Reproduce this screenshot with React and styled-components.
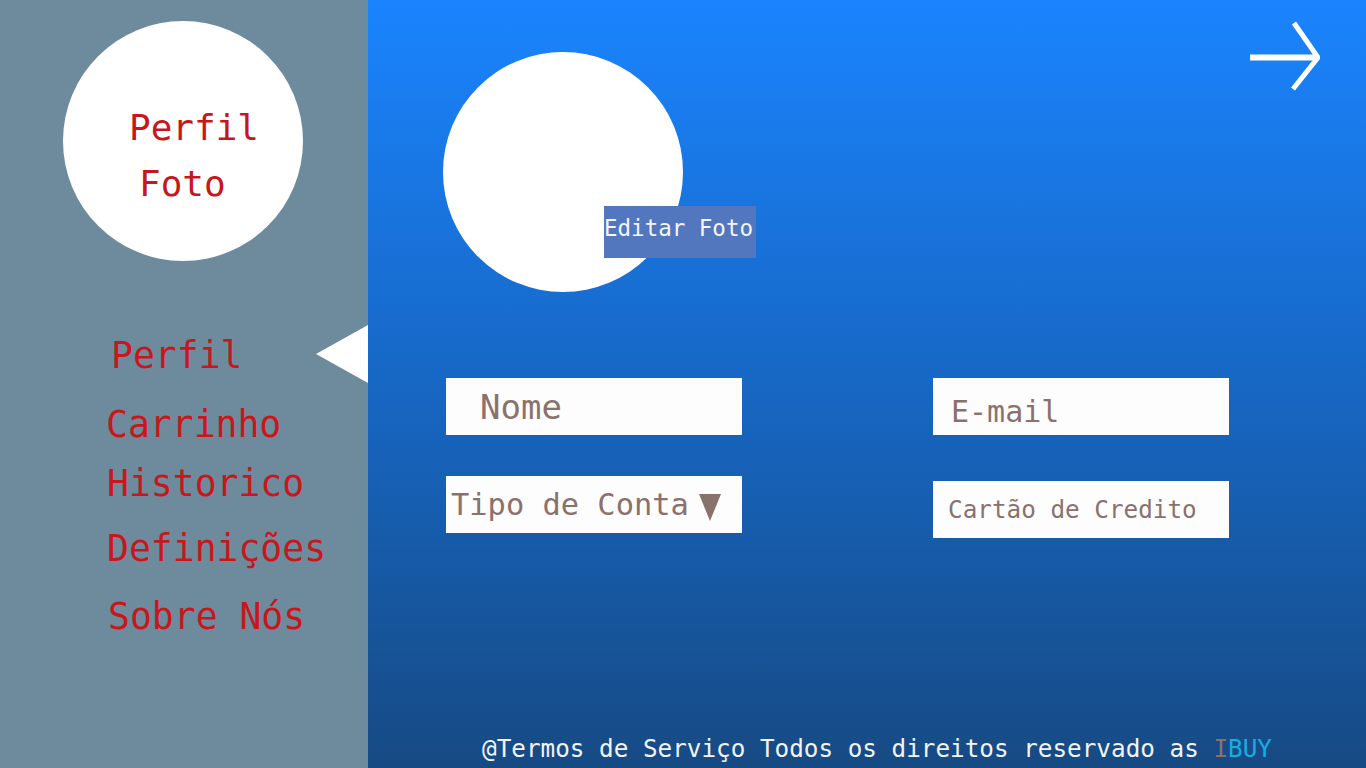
import React from "react";
import styled, { createGlobalStyle } from "styled-components";

const Global = createGlobalStyle`
  html, body { margin: 0; padding: 0; }
  body {
    font-family: "DejaVu Sans Mono", "Liberation Mono", monospace;
    overflow: hidden;
  }
  * { box-sizing: border-box; }
`;

const Page = styled.div`
  display: flex;
  width: 1366px;
  height: 768px;
`;

const Sidebar = styled.aside`
  width: 368px;
  flex: none;
  height: 100%;
  background: #6d8b9c;
  display: flex;
  flex-direction: column;
`;

const Avatar = styled.div`
  width: 240px;
  height: 240px;
  margin: 21px 0 0 63px;
  border-radius: 50%;
  background: #ffffff;
  padding-top: 78.5px;
  font-size: 36px;
  line-height: 56px;
  color: #c8171c;
`;

const AvatarLine = styled.div`
  padding-left: ${(p) => p.$indent}px;
`;

const Nav = styled.nav`
  margin-top: 64px;
  display: flex;
  flex-direction: column;
`;

const ActiveRow = styled.div`
  height: 58px;
  display: flex;
  align-items: center;
  justify-content: space-between;
  padding-left: ${(p) => p.$indent}px;
`;

const NavText = styled.span`
  font-size: 36.4px;
  line-height: 36px;
  color: #c8171c;
  padding-top: 3px;
`;

const Pointer = styled.span`
  width: 0;
  height: 0;
  border-top: 29px solid transparent;
  border-bottom: 29px solid transparent;
  border-right: 52px solid #ffffff;
`;

const NavItem = styled.div`
  font-size: 36.4px;
  line-height: 36px;
  color: #c8171c;
  white-space: nowrap;
  margin-top: ${(p) => p.$top}px;
  padding-left: ${(p) => p.$indent}px;
`;

const Main = styled.main`
  flex: 1;
  height: 100%;
  display: flex;
  flex-direction: column;
  background: linear-gradient(180deg, #1a84fe 0%, #1767c4 50%, #164a83 100%);
`;

const TopRow = styled.div`
  display: flex;
  justify-content: space-between;
  align-items: flex-start;
  padding: 20px 46px 0 75px;
`;

const ProfileBlock = styled.div`
  position: relative;
  margin-top: 32px;
  width: 240px;
  height: 240px;
`;

const PhotoCircle = styled.div`
  width: 240px;
  height: 240px;
  border-radius: 50%;
  background: #ffffff;
`;

const EditButton = styled.button`
  position: absolute;
  left: 161px;
  top: 154px;
  width: 152px;
  height: 52px;
  margin: 0;
  border: 0;
  padding: 0 0 8px 0;
  text-align: left;
  background: #5277bf;
  color: #f6f6f6;
  font-family: "DejaVu Sans Mono", monospace;
  font-size: 22.5px;
  line-height: 44px;
  white-space: nowrap;
  cursor: pointer;
`;

const ArrowIcon = styled.svg`
  display: block;
  flex: none;
`;

const Form = styled.div`
  margin-top: 86px;
  padding-left: 78px;
  display: grid;
  grid-template-columns: 296px 296px;
  column-gap: 191px;
  row-gap: 41px;
  align-items: start;
`;

const Field = styled.input`
  display: block;
  width: 296px;
  height: 57px;
  margin: ${(p) => p.$top || 0}px 0 0 0;
  border: 0;
  outline: none;
  background: #fdfdfd;
  font-family: "DejaVu Sans Mono", monospace;
  font-size: ${(p) => p.$size}px;
  padding: ${(p) => p.$padTop || 0}px 0 0 ${(p) => p.$indent}px;
  color: #8a716e;
  &::placeholder {
    color: #8a716e;
    opacity: 1;
  }
`;

const SelectBox = styled.div`
  width: 296px;
  height: 57px;
  background: #fdfdfd;
  display: flex;
  align-items: center;
  padding-left: 5px;
  gap: 10px;
  color: #8a716e;
  font-size: 30.4px;
  line-height: 34px;
  cursor: pointer;
  padding-top: 1px;
  white-space: nowrap;
`;

const Caret = styled.span`
  width: 0;
  height: 0;
  border-left: 11.5px solid transparent;
  border-right: 11.5px solid transparent;
  border-top: 27px solid #8a716e;
  margin-top: 4px;
`;

const Footer = styled.footer`
  margin-top: auto;
  padding: 0 0 4px 114px;
  font-size: 24.3px;
  line-height: 30px;
  color: #f2f4f8;
  white-space: nowrap;
`;

const BrandI = styled.span`
  color: #8a716e;
`;

const BrandRest = styled.span`
  color: #17aee0;
`;

export default function App() {
  return (
    <>
      <Global />
      <Page>
        <Sidebar>
          <Avatar>
            <AvatarLine $indent={66}>Perfil</AvatarLine>
            <AvatarLine $indent={76}>Foto</AvatarLine>
          </Avatar>
          <Nav>
            <ActiveRow $indent={111}>
              <NavText>Perfil</NavText>
              <Pointer />
            </ActiveRow>
            <NavItem $top={23.5} $indent={106}>Carrinho</NavItem>
            <NavItem $top={23} $indent={107}>Historico</NavItem>
            <NavItem $top={29} $indent={107}>Definições</NavItem>
            <NavItem $top={32} $indent={108}>Sobre Nós</NavItem>
          </Nav>
        </Sidebar>
        <Main>
          <TopRow>
            <ProfileBlock>
              <PhotoCircle />
              <EditButton>Editar Foto</EditButton>
            </ProfileBlock>
            <ArrowIcon width="72" height="72" viewBox="0 0 72 72" fill="none">
              <line x1="2" y1="37.5" x2="69" y2="37.5" stroke="#fff" strokeWidth="6" />
              <polyline points="46,3 70,37.5 45,69" stroke="#fff" strokeWidth="5" fill="none" />
            </ArrowIcon>
          </TopRow>
          <Form>
            <Field placeholder="Nome" $size={34} $indent={34} />
            <Field placeholder="E-mail" $size={30} $indent={18} $padTop={10} />
            <SelectBox>
              <span>Tipo de Conta</span>
              <Caret />
            </SelectBox>
            <Field placeholder="Cartão de Credito" $size={24.3} $indent={15} $top={5} />
          </Form>
          <Footer>
            @Termos de Serviço Todos os direitos reservado as <BrandI>I</BrandI>
            <BrandRest>BUY</BrandRest>
          </Footer>
        </Main>
      </Page>
    </>
  );
}
